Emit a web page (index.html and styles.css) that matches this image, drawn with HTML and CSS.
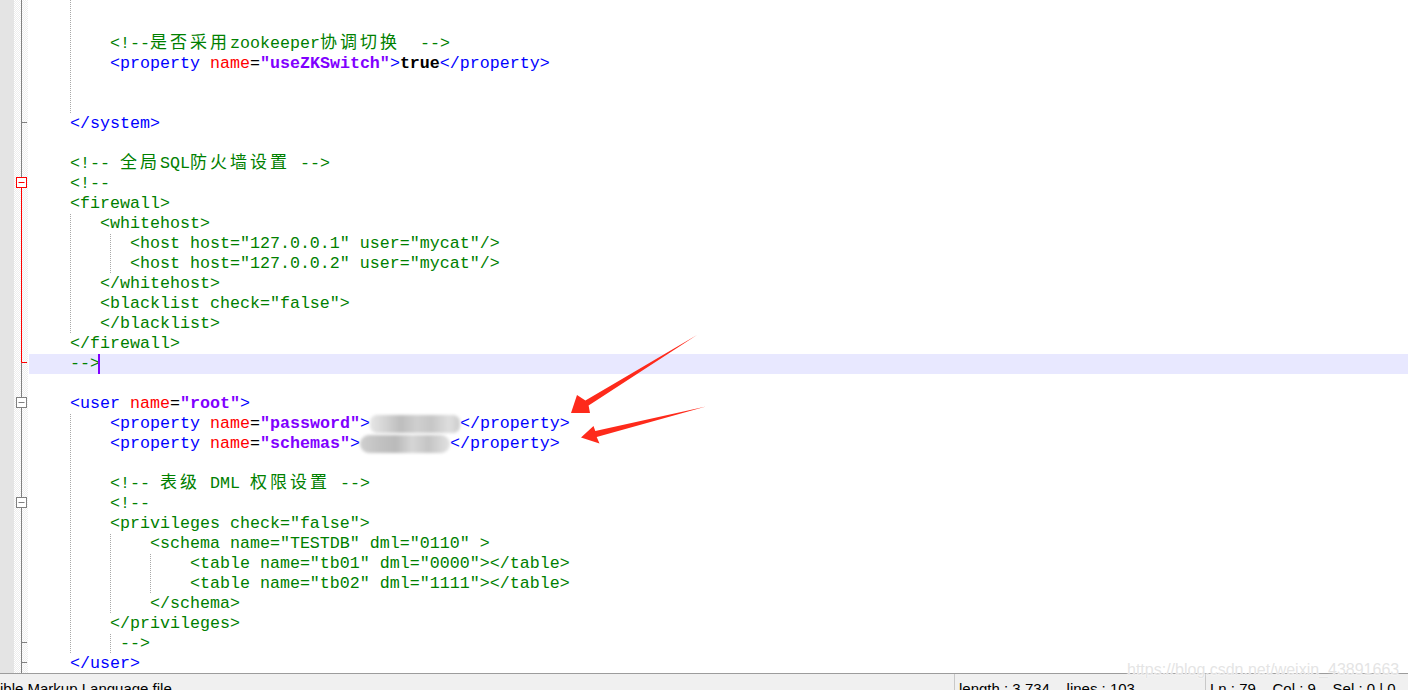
FILE: index.html
```html
<!DOCTYPE html>
<html lang="zh">
<head>
  <meta charset="UTF-8">
  <title>schema.xml - Notepad++</title>
  <link rel="stylesheet" href="styles.css">
</head>
<body>
  <div class="editor">
    <div class="marks"></div>
    <!-- fold margin -->
    <div class="folds">
      <svg width="14" height="673" viewBox="0 0 14 673">
        <g fill="none" stroke="#808080" stroke-width="1">
          <path d="M7.5 0V177.5"/>
          <path d="M7.5 122.5H13"/>
          <path d="M7.5 362.5V397.5"/>
          <rect x="2.5" y="397.5" width="10" height="10" fill="#fff"/>
          <path d="M4.5 402.5H10.5"/>
          <path d="M7.5 407.5V497.5"/>
          <rect x="2.5" y="497.5" width="10" height="10" fill="#fff"/>
          <path d="M4.5 502.5H10.5"/>
          <path d="M7.5 507.5V673"/>
          <path d="M7.5 642.5H13M7.5 662.5H13"/>
        </g>
        <g fill="none" stroke="#ff0000" stroke-width="1">
          <rect x="2.5" y="177.5" width="10" height="10" fill="#fff"/>
          <path d="M4.5 182.5H10.5"/>
          <path d="M7.5 187.5V362.5H13"/>
        </g>
      </svg>
    </div>

    <div class="code">
<div class="ln g1"></div>
<div class="ln g1"></div>
<div class="ln g1">        <span class="c">&lt;!--<span class="k">是否采用</span>zookeeper<span class="k">协调切换</span>  --&gt;</span></div>
<div class="ln g1">        <span class="t">&lt;property</span> <span class="a">name</span>=<span class="v">"useZKSwitch"</span><span class="t">&gt;</span><b class="b">true</b><span class="t">&lt;/property&gt;</span></div>
<div class="ln g1"></div>
<div class="ln g1"></div>
<div class="ln">    <span class="t">&lt;/system&gt;</span></div>
<div class="ln"></div>
<div class="ln">    <span class="c">&lt;!-- <span class="k">全局</span>SQL<span class="k">防火墙设置</span> --&gt;</span></div>
<div class="ln c">    &lt;!--</div>
<div class="ln c">    &lt;firewall&gt;</div>
<div class="ln c g1">       &lt;whitehost&gt;</div>
<div class="ln c g2">          &lt;host host="127.0.0.1" user="mycat"/&gt;</div>
<div class="ln c g2">          &lt;host host="127.0.0.2" user="mycat"/&gt;</div>
<div class="ln c g1">       &lt;/whitehost&gt;</div>
<div class="ln c g1">       &lt;blacklist check="false"&gt;</div>
<div class="ln c g1">       &lt;/blacklist&gt;</div>
<div class="ln c">    &lt;/firewall&gt;</div>
<div class="ln c cur">    --&gt;<span class="caret"></span></div>
<div class="ln"></div>
<div class="ln">    <span class="t">&lt;user</span> <span class="a">name</span>=<span class="v">"root"</span><span class="t">&gt;</span></div>
<div class="ln g1">        <span class="t">&lt;property</span> <span class="a">name</span>=<span class="v">"password"</span><span class="t">&gt;</span><span class="smudge"></span><span class="t">&lt;/property&gt;</span></div>
<div class="ln g1">        <span class="t">&lt;property</span> <span class="a">name</span>=<span class="v">"schemas"</span><span class="t">&gt;</span><span class="smudge smudge-b"></span><span class="t">&lt;/property&gt;</span></div>
<div class="ln g1"></div>
<div class="ln g1">        <span class="c">&lt;!-- <span class="k">表级</span> DML <span class="k">权限设置</span> --&gt;</span></div>
<div class="ln c g1">        &lt;!--</div>
<div class="ln c g1">        &lt;privileges check="false"&gt;</div>
<div class="ln c g2">            &lt;schema name="TESTDB" dml="0110" &gt;</div>
<div class="ln c g3">                &lt;table name="tb01" dml="0000"&gt;&lt;/table&gt;</div>
<div class="ln c g3">                &lt;table name="tb02" dml="1111"&gt;&lt;/table&gt;</div>
<div class="ln c g2">            &lt;/schema&gt;</div>
<div class="ln c g1">        &lt;/privileges&gt;</div>
<div class="ln c g2">         --&gt;</div>
<div class="ln">    <span class="t">&lt;/user&gt;</span></div>
<div class="ln"></div>
    </div>
  </div>

  <div class="status">
    <div class="sec sec-type">ible Markup Language file</div>
    <div class="sec sec-len">length : 3,734    lines : 103</div>
    <div class="sec sec-pos">Ln : 79    Col : 9    Sel : 0 | 0</div>
  </div>

  <!-- annotations pasted on top of the screenshot -->
  <svg class="arrows" width="1408" height="690" viewBox="0 0 1408 690">
    <polygon fill="#fe2a1b" points="571,413 577,395 585.4,400.5 697,335 588.6,405.5 590,413"/>
    <polygon fill="#fe2a1b" points="581,437.5 593.5,426 595.3,431.1 706,406.5 596.7,436.9 599.5,443.5"/>
  </svg>
  <div class="watermark">https://blog.csdn.net/weixin_43891663</div>
</body>
</html>
```

FILE: styles.css
```css
body {
  margin: 0;
  width: 1408px;
  height: 690px;
  overflow: hidden;
  background: #fff;
  font-family: "Liberation Mono", "Courier New", monospace;
  position: relative;
}
.editor {
  display: flex;
  height: 673px;
  overflow: hidden;
}
.marks {
  flex: none;
  width: 14px;
  background: #e4e4e4;
}
.folds {
  flex: none;
  width: 14px;
  background-color: #fff;
  background-image: conic-gradient(#ededed 25%, transparent 0 50%, #ededed 0 75%, transparent 0);
  background-size: 2px 2px;
}
.folds svg {
  display: block;
}
.code {
  flex: 1;
  margin-top: -6px;
  font-size: 16.67px;
  line-height: 20px;
  color: #000;
}
.ln {
  height: 20px;
  padding-left: 2px;
  white-space: pre;
  background-repeat: repeat-y;
  background-size: 1px 2px;
}
/* indent guides */
.g1 {
  background-image: linear-gradient(#a8a8a8 50%, transparent 50%);
  background-position: 42px 0;
}
.g2 {
  background-image: linear-gradient(#a8a8a8 50%, transparent 50%), linear-gradient(#a8a8a8 50%, transparent 50%);
  background-position: 42px 0, 82px 0;
}
.g3 {
  background-image: linear-gradient(#a8a8a8 50%, transparent 50%), linear-gradient(#a8a8a8 50%, transparent 50%), linear-gradient(#a8a8a8 50%, transparent 50%);
  background-position: 42px 0, 82px 0, 122px 0;
}
.cur {
  background-color: #e8e8ff;
  margin-left: 1px;
  padding-left: 1px;
}
.caret {
  display: inline-block;
  width: 2px;
  height: 20px;
  margin-left: -2px;
  vertical-align: top;
  background: #8000ff;
}
.t { color: #0000ff; }
.a { color: #ff0000; }
.v { color: #8000ff; font-weight: bold; }
.b { color: #000; font-weight: bold; }
.c { color: #008000; }
.k {
  font-family: "Noto Sans CJK SC", sans-serif;
  font-size: 17px;
  line-height: 0;
  letter-spacing: 3px;
}
.smudge {
  display: inline-block;
  width: 90px;
  height: 18px;
  margin-top: 1px;
  vertical-align: top;
  border-radius: 7px;
  background: linear-gradient(90deg, #e6e6e6, #d2d2d2 18%, #bdbdbd 34%, #cfcfcf 52%, #c6c6c6 68%, #dedede 88%, #cccccc);
  filter: blur(1.5px);
}
.smudge-b {
  border-radius: 9px;
  background: linear-gradient(90deg, #cfcfcf, #c2c2c2 20%, #bababa 40%, #d6d6d6 58%, #c4c4c4 76%, #e2e2e2);
}

.status {
  display: flex;
  height: 16px;
  border-top: 1px solid #9c9c9c;
  background: #f0f0f0;
  font-family: "Liberation Sans", Arial, sans-serif;
  font-size: 15px;
  line-height: 18px;
  color: #000;
  overflow: hidden;
}
.sec {
  padding-top: 6px;
  white-space: pre;
}
.sec-type {
  width: 954px;
}
.sec-len {
  width: 246px;
  padding-left: 4px;
  border-left: 1px solid #c8c8c8;
}
.sec-pos {
  flex: 1;
  padding-left: 4px;
  border-left: 1px solid #c8c8c8;
}

.arrows {
  position: absolute;
  left: 0;
  top: 0;
  pointer-events: none;
}
.watermark {
  position: absolute;
  left: 1127px;
  top: 661px;
  font-family: "Liberation Sans", Arial, sans-serif;
  font-size: 16px;
  color: rgba(225, 225, 225, 0.9);
  text-shadow: 0 0 1px #fff, 0 0 2px #fff;
}
```
